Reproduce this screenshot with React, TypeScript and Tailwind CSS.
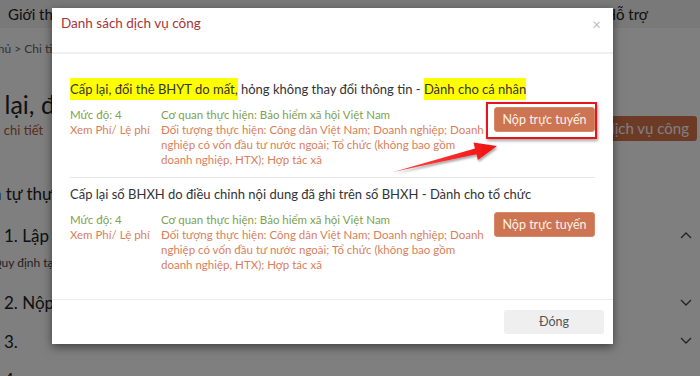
import React from "react";

const orgLines = [
  "Đối tượng thực hiện: Công dân Việt Nam; Doanh nghiệp; Doanh",
  "nghiệp có vốn đầu tư nước ngoài; Tổ chức (không bao gồm",
  "doanh nghiệp, HTX); Hợp tác xã",
];

const items = [
  {
    id: 1,
    title: (
      <>
        <span className="bg-[#ffff00] py-[3px]">Cấp lại, đổi thẻ BHYT do mất,</span> hỏng không thay đổi thông tin -{" "}
        <span className="bg-[#ffff00] py-[3px]">Dành cho cá nhân</span>
      </>
    ),
    marked: true,
  },
  {
    id: 2,
    title: <>Cấp lại sổ BHXH do điều chỉnh nội dung đã ghi trên sổ BHXH - Dành cho tổ chức</>,
    marked: false,
  },
];

function Chevron({ up }: { up?: boolean }) {
  return (
    <svg width="12" height="8" viewBox="0 0 12 8" fill="none" stroke="#444" strokeWidth="1.3">
      {up ? <path d="M1 7 6 2l5 5" /> : <path d="M1 1l5 5 5-5" />}
    </svg>
  );
}

function BackgroundPage() {
  return (
    <div className="flex h-[376px] flex-col overflow-hidden bg-white text-[#222]">
      <div className="flex h-[28px] shrink-0 items-center justify-between bg-[#f2f2f2] pl-[8px] pr-[52px] text-[15px]">
        <span>Giới thiệu</span>
        <span>Hỗ trợ</span>
      </div>
      <div className="ml-[-40px] mt-[12px] text-[12px] text-[#666]">Trang chủ &gt; Chi tiết thủ tục</div>
      <div className="flex items-start">
        <div className="flex flex-col">
          <div className="ml-[-45px] mt-[30px] text-[25px] leading-[32px]">Cấp lại, đổi thẻ BHYT</div>
          <div className="ml-[-25px] mt-[1px] text-[13px] text-[#b4553a]">Xem chi tiết</div>
        </div>
        <div className="ml-auto mr-[3px] mt-[58px] flex h-[25px] items-center rounded-[3px] bg-[#d8754a] px-[8px] text-[15px] text-white">
          Danh sách dịch vụ công
        </div>
      </div>
      <div className="ml-[-36px] mt-[40px] text-[17px]">Trình tự thực hiện</div>
      <div className="flex flex-col pr-[8px]">
        <div className="mt-[16px] flex items-center justify-between">
          <span className="pl-[4px] text-[17px]">1. Lập hồ sơ</span>
          <Chevron up />
        </div>
        <div className="ml-[-8px] mt-[6px] text-[12px] text-[#444]">Quy định tại</div>
        <div className="mt-[18px] flex items-center justify-between">
          <span className="pl-[4px] text-[17px]">2. Nộp hồ sơ</span>
          <Chevron />
        </div>
        <div className="mt-[13px] flex items-center justify-between">
          <span className="pl-[4px] text-[17px]">3.</span>
          <Chevron />
        </div>
        <div className="mt-[13px] flex items-center justify-between">
          <span className="pl-[4px] text-[17px]">4.</span>
          <Chevron />
        </div>
      </div>
    </div>
  );
}

function ServiceItem({ title, marked, last }: { title: React.ReactNode; marked: boolean; last?: boolean }) {
  return (
    <div className={`flex flex-col ${last ? "pt-[6px] pb-[27px]" : "pb-[10px] border-b border-[#e6e6e6]"}`}>
      <div className="whitespace-nowrap text-[13px] leading-[20px] text-[#333]">{title}</div>
      <div className="mt-[8px] flex items-start text-[11.5px] leading-[15px]">
        <div className="flex w-[91px] shrink-0 flex-col">
          <span className="text-[#7f9f50]">Mức độ: 4</span>
          <span className="text-[#d9805c]">Xem Phí/ Lệ phí</span>
        </div>
        <div className="flex w-[322px] shrink-0 flex-col whitespace-nowrap">
          <span className="text-[#7f9f50]">Cơ quan thực hiện: Bảo hiểm xã hội Việt Nam</span>
          {orgLines.map((l) => (
            <span key={l} className="text-[#d9805c]">
              {l}
            </span>
          ))}
        </div>
        <div className="relative ml-auto shrink-0">
          <button className="flex h-[25px] w-[101px] items-center justify-center rounded-[3px] border border-[#d88a68] bg-[#cd7552] text-[12.5px] text-[#fbf1ea]">
            Nộp trực tuyến
          </button>
          {marked && (
            <div className="pointer-events-none absolute left-[-8px] right-[-2px] top-[-5px] bottom-[-7px] border-[2.5px] border-[#e8141b] shadow-[1px_2px_3px_rgba(0,0,0,0.35)]" />
          )}
        </div>
      </div>
    </div>
  );
}

export default function App() {
  return (
    <div className="relative h-[376px] w-[700px] overflow-hidden font-['Lato','Open_Sans',sans-serif]">
      <BackgroundPage />
      <div className="absolute inset-0 bg-black/[0.5]" />

      <div className="absolute left-[52px] top-[8px] flex w-[561px] flex-col bg-white shadow-[0_3px_9px_rgba(0,0,0,0.5)]">
        <div className="flex h-[46px] items-start justify-between border-b-2 border-[#f0f0f0] pl-[9px] pr-[12px] pt-[5px]">
          <span className="text-[13.5px] leading-[20px] text-[#a8343a]">Danh sách dịch vụ công</span>
          <span className="mt-[3px] text-[15px] leading-[16px] text-[#bdbdbd]">×</span>
        </div>
        <div className="flex flex-col px-[18px] pt-[25px]">
          {items.map((it, i) => (
            <ServiceItem key={it.id} title={it.title} marked={it.marked} last={i === items.length - 1} />
          ))}
        </div>
        <div className="flex justify-end border-t border-[#ececec] px-[9px] pb-[10px] pt-[10px]">
          <button className="flex h-[24px] w-[100px] items-center justify-center rounded-[3px] bg-[#efefef] text-[12.5px] text-[#555]">
            Đóng
          </button>
        </div>
      </div>

      <svg className="pointer-events-none absolute left-0 top-0" width="700" height="376">
        <defs>
          <linearGradient id="arrowFill" x1="0" y1="0" x2="1" y2="0">
            <stop offset="0" stopColor="#ff4a4a" />
            <stop offset="1" stopColor="#ee1111" />
          </linearGradient>
          <filter id="arrowShadow" x="-10%" y="-50%" width="120%" height="200%">
            <feDropShadow dx="1" dy="2" stdDeviation="1.2" floodColor="#000" floodOpacity="0.35" />
          </filter>
        </defs>
        <polygon
          points="393,172 475,148.4 473.5,142.6 497,146 477.9,160 476.4,154.2"
          fill="url(#arrowFill)"
          filter="url(#arrowShadow)"
        />
      </svg>
    </div>
  );
}
